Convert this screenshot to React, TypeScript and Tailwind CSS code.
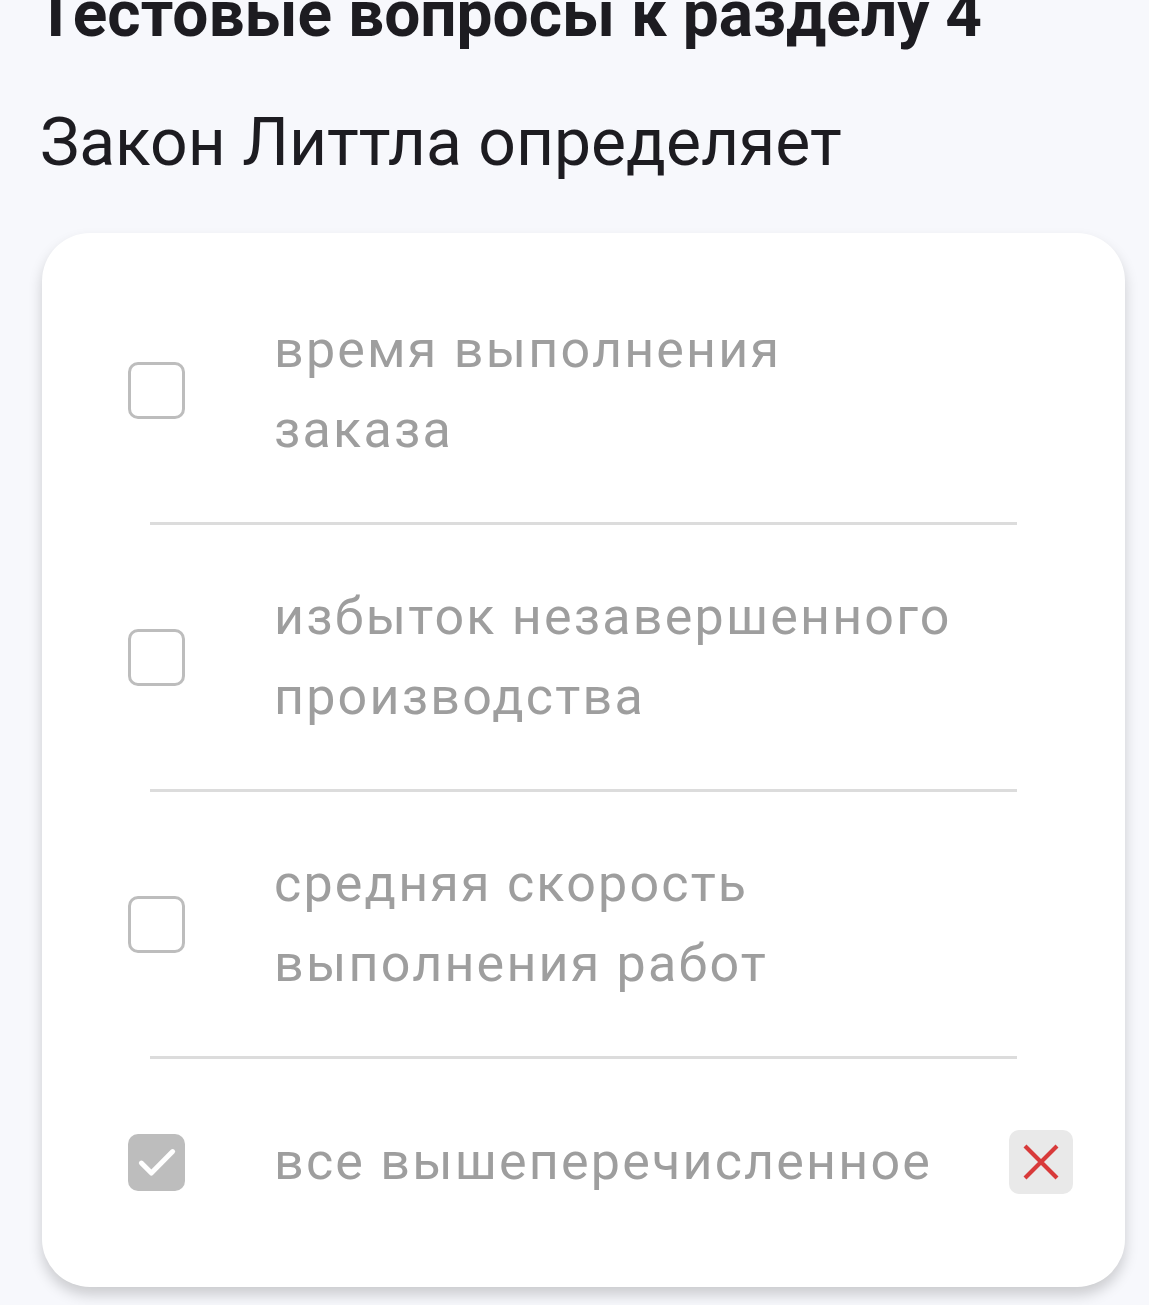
import React from 'react';

type Answer = { text: string[]; checked?: boolean; wrong?: boolean };

const answers: Answer[] = [
  { text: ['время выполнения', 'заказа'] },
  { text: ['избыток незавершенного', 'производства'] },
  { text: ['средняя скорость', 'выполнения работ'] },
  { text: ['все вышеперечисленное'], checked: true, wrong: true },
];

const Box = ({ checked }: { checked?: boolean }) =>
  checked ? (
    <div className="flex h-[57px] w-[57px] shrink-0 items-center justify-center rounded-[10px] bg-[#bdbdbd]">
      <svg width="50" height="50" viewBox="0 0 24 24" fill="none" stroke="#fff" strokeWidth="2.4" strokeLinecap="round" strokeLinejoin="round">
        <path d="M4.5 12.5l4.8 4.8L19.5 7" />
      </svg>
    </div>
  ) : (
    <div className="h-[57px] w-[57px] shrink-0 rounded-[10px] border-[3px] border-[#bdbdbd] bg-white" />
  );

export default function App() {
  return (
    <div className="min-h-[1305px] overflow-hidden bg-[#f7f8fc] font-['Roboto',sans-serif]">
      <h1 className="-mt-[23px] ml-[36px] whitespace-nowrap text-[64px] font-bold leading-[76px] text-[#1d1c21]">
        Тестовые вопросы к разделу 4
      </h1>
      <p className="ml-[40px] mt-[48px] text-[66px] leading-[84px] text-[#1d1c21]">Закон Литтла определяет</p>
      <div className="ml-[42px] mr-[24px] mt-[48px] rounded-[48px] bg-white pb-[33px] pt-[25px] shadow-[0_8px_14px_rgba(0,0,0,0.18)]">
        {answers.map((a, i) => (
          <div key={i}>
            {i > 0 && <div className="mx-[108px] h-[3px] bg-[#dcdcdc]" />}
            <div className={`flex items-center pb-[52px] pl-[86px] pr-[52px] ${i === 3 ? 'pt-[63px]' : 'pt-[52px]'}`}>
              <Box checked={a.checked} />
              <div className="ml-[89px] flex-1 text-[52px] leading-[80px] tracking-[2.2px] text-[#9e9e9e]">
                {a.text.map((t, j) => (
                  <div key={j}>{t}</div>
                ))}
              </div>
              {a.wrong && (
                <div className="flex h-[64px] w-[64px] items-center justify-center rounded-[10px] bg-[#e9e9e9]">
                  <svg width="48" height="48" viewBox="0 0 24 24" fill="none" stroke="#d83a3a" strokeWidth="2.1" strokeLinecap="butt">
                    <path d="M4 4l16 16M20 4L4 20" />
                  </svg>
                </div>
              )}
            </div>
          </div>
        ))}
      </div>
    </div>
  );
}
